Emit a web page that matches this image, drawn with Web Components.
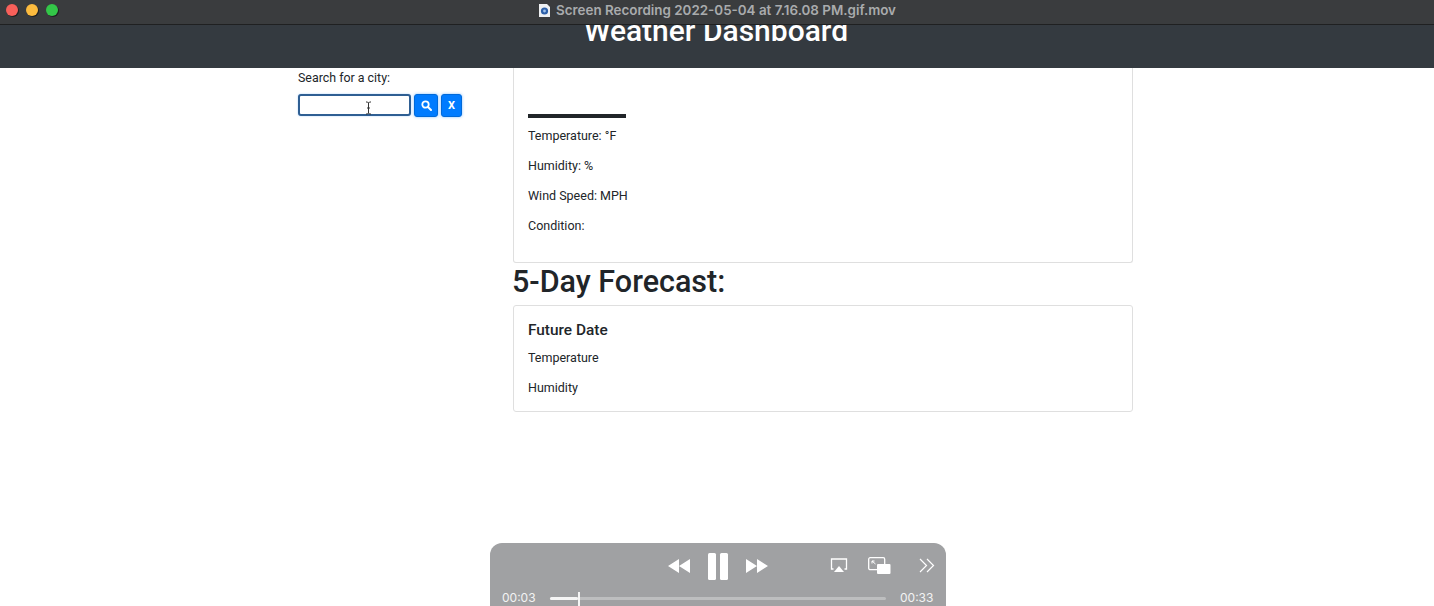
<!DOCTYPE html>
<html>
<head>
<meta charset="utf-8">
<title>Weather Dashboard</title>
<style>
  html, body { margin: 0; height: 100%; overflow: hidden; background: #fff; }
  body { font-family: Roboto, "Liberation Sans", Arial, sans-serif; color: #212529; }
</style>
</head>
<body>
<mac-titlebar>Screen Recording 2022-05-04 at 7.16.08 PM.gif.mov</mac-titlebar>
<site-header>Weather Dashboard</site-header>
<dash-main>
  <city-search slot="side"></city-search>
  <info-card pad="current">
    <div class="rule"></div>
    <card-line>Temperature: °F</card-line>
    <card-line>Humidity: %</card-line>
    <card-line>Wind Speed: MPH</card-line>
    <card-line>Condition:</card-line>
  </info-card>
  <forecast-title>5-Day Forecast:</forecast-title>
  <info-card pad="future">
    <card-title>Future Date</card-title>
    <card-line>Temperature</card-line>
    <card-line>Humidity</card-line>
  </info-card>
</dash-main>
<video-controls></video-controls>

<script>
function define(name, css, html) {
  customElements.define(name, class extends HTMLElement {
    constructor() {
      super();
      this.attachShadow({ mode: "open" }).innerHTML = `<style>${css}</style>${html}`;
    }
  });
}

define("mac-titlebar", `
  :host { display: flex; align-items: center; justify-content: center; height: 25px; box-sizing: border-box;
    background: #3a3c3e; border-bottom: 1px solid #1f2021; position: relative; z-index: 2;
    font: 600 13.4px Inter, "Liberation Sans", sans-serif; color: #a9abad; padding-bottom: 4px; }
  .lights { position: absolute; left: 6px; top: 4px; display: flex; gap: 8px; }
  .lights i { width: 12px; height: 12px; border-radius: 50%; box-shadow: 1px 1px 0 rgba(0,0,0,.45); }
  .r { background: #f9605a; } .y { background: #fcbb3e; } .g { background: #33c748; }
  svg { margin-right: 5px; }
`, `
  <div class="lights"><i class="r"></i><i class="y"></i><i class="g"></i></div>
  <svg width="13" height="15" viewBox="0 0 13 15"><path d="M1 1h8l3 3v10H1z" fill="#eef0f2"/><circle cx="6.500" cy="8" r="3.600" fill="#2c5fa8"/><circle cx="6.500" cy="8" r="1.400" fill="#9cc0ea"/></svg>
  <span><slot></slot></span>
`);

define("site-header", `
  :host { display: block; height: 43px; background: #343a40; overflow: hidden; text-align: center; }
  h1 { margin: -13px 0 0 -2px; font: 500 30px/38px Roboto, "Liberation Sans", Arial, sans-serif; color: #fff; }
`, `<h1><slot></slot></h1>`);

define("dash-main", `
  :host { display: grid; grid-template-columns: 215px 620px; padding-left: 298px; }
  .main { display: block; }
`, `<slot name="side"></slot><div class="main"><slot></slot></div>`);

define("city-search", `
  :host { display: block; font-size: 12.400px; padding-top: 2px; }
  label { display: block; line-height: 15px; margin-bottom: 9px; color: #212529; }
  .row { display: flex; align-items: flex-start; gap: 3px; }
  .field { width: 113px; height: 22px; box-sizing: border-box; border: 2px solid #2f5f93; border-radius: 3px;
    background: #fff; box-shadow: 0 0 2px rgba(0,123,255,.35); position: relative; }
  .cursor { position: absolute; left: 65px; top: 5px; }
  button { height: 23px; width: 24px; padding: 0; border: 1px solid #0069d9; border-radius: 3px; background: #007bff;
    color: #fff; font: 700 11px Roboto, "Liberation Sans", sans-serif; display: flex; align-items: center; justify-content: center;
    box-shadow: 0 0 3px rgba(0,123,255,.5); }
  button.x { width: 21px; }
`, `
  <label>Search for a city:</label>
  <div class="row">
    <div class="field">
      <svg class="cursor" width="7" height="14" viewBox="0 0 7 14"><path d="M1 1h1.500l1 1 1-1H6M3.500 2v10M1 13h1.500l1-1 1 1H6M2 7h3" fill="none" stroke="#333" stroke-width="1"/></svg>
    </div>
    <button aria-label="Search"><svg width="11" height="11" viewBox="0 0 11 11"><circle cx="4.500" cy="4.500" r="3.200" fill="none" stroke="#fff" stroke-width="1.800"/><path d="M7 7l3 3" stroke="#fff" stroke-width="2" stroke-linecap="round"/></svg></button>
    <button class="x">X</button>
  </div>
`);

define("info-card", `
  :host { display: block; box-sizing: border-box; border: 1px solid #dfdfdf; border-radius: 3px; background: #fff; padding: 0 14px; }
  :host([pad="current"]) { border-top: 0; border-radius: 0 0 3px 3px; height: 195px; padding-top: 46px; }
  :host([pad="future"]) { height: 107px; padding-top: 15px; }
  ::slotted(.rule) { width: 98px; height: 4px; background: #212529; margin-bottom: 10px; }
`, `<slot></slot>`);

define("card-line", `
  :host { display: block; font-size: 12.500px; line-height: 15px; height: 15px; margin: 0 0 15px; color: #212529; }
`, `<slot></slot>`);

define("card-title", `
  :host { display: block; font-size: 15.400px; font-weight: 500; line-height: 18px; margin-bottom: 11px; color: #212529; }
`, `<slot></slot>`);

define("forecast-title", `
  :host { display: block; font-size: 30.500px; font-weight: 500; line-height: 36px; height: 42px; padding-top: 1px; margin-left: -1px; box-sizing: border-box; color: #212529; }
`, `<slot></slot>`);

define("video-controls", `
  :host { position: absolute; left: 490px; top: 543px; width: 456px; height: 63px; background: #a0a1a3;
    border-radius: 12px 12px 0 0; overflow: hidden; color: #fff; font: 12px Inter, "Liberation Sans", sans-serif; }
  svg { position: absolute; }
  .time { position: absolute; top: 47px; line-height: 16px; color: #f3f3f3; }
  .track { position: absolute; left: 60px; top: 54px; width: 336px; height: 3px; border-radius: 2px; background: #bdbebf; }
  .done { position: absolute; left: 60px; top: 54px; width: 28px; height: 3px; border-radius: 2px; background: #f5f5f5; }
  .head { position: absolute; left: 88px; top: 49px; width: 2px; height: 14px; background: #f5f5f5; }
`, `
  <svg style="left:177px;top:15px" width="24" height="16" viewBox="0 0 24 16" fill="#fff"><path d="M12 1v14L1 8zM23 1v14L12 8z"/></svg>
  <svg style="left:218px;top:10px" width="21" height="27" viewBox="0 0 21 27" fill="#fff"><rect x="0" y="0" width="8" height="27" rx="1.500"/><rect x="12" y="0" width="8" height="27" rx="1.500"/></svg>
  <svg style="left:255px;top:15px" width="24" height="16" viewBox="0 0 24 16" fill="#fff"><path d="M1 1v14L12 8zM12 1v14L23 8z"/></svg>
  <svg style="left:340px;top:15px" width="18" height="16" viewBox="0 0 18 16"><path d="M3.500 11H1.500V1h15v10h-2" fill="none" stroke="#fff" stroke-width="1.300"/><path d="M9 8l5 6H4z" fill="#fff"/></svg>
  <svg style="left:378px;top:14px" width="23" height="18" viewBox="0 0 23 18"><rect x=".7" y=".7" width="16" height="12" rx="1.500" fill="none" stroke="#fff" stroke-width="1.300"/><rect x="9" y="7" width="13.500" height="10" rx="1" fill="#fff"/><path d="M4 4l3.500 3M4 4h2.500M4 4v2.500" stroke="#fff" stroke-width="1" fill="none"/></svg>
  <svg style="left:429px;top:15px" width="16" height="15" viewBox="0 0 16 15" fill="none" stroke="#fff" stroke-width="1.200"><path d="M1 1l6.500 6.500L1 14M8 1l6.500 6.500L8 14"/></svg>
  <span class="time" style="left:12px">00:03</span>
  <div class="track"></div><div class="done"></div><div class="head"></div>
  <span class="time" style="left:410px">00:33</span>
`);
</script>
</body>
</html>
